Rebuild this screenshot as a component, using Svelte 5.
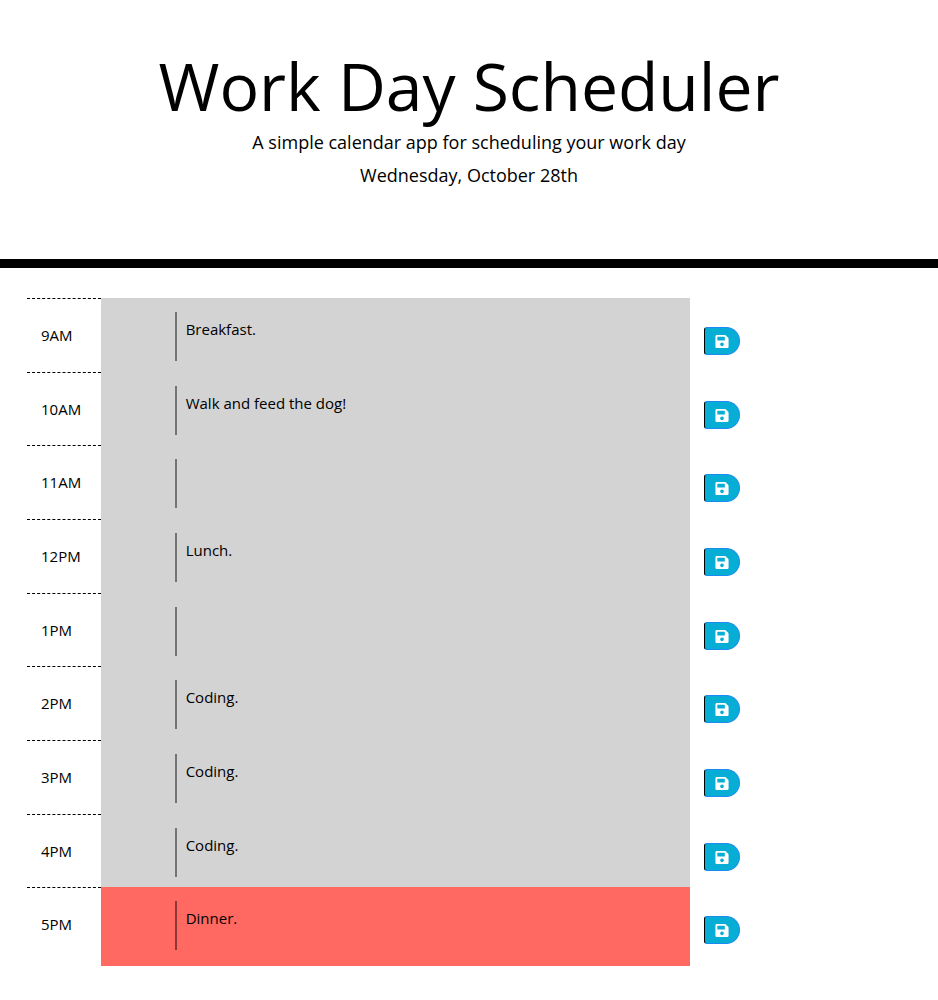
<script>
  let hours = $state([
    { label: '9AM', text: 'Breakfast.' },
    { label: '10AM', text: 'Walk and feed the dog!' },
    { label: '11AM', text: '' },
    { label: '12PM', text: 'Lunch.' },
    { label: '1PM', text: '' },
    { label: '2PM', text: 'Coding.' },
    { label: '3PM', text: 'Coding.' },
    { label: '4PM', text: 'Coding.' },
    { label: '5PM', text: 'Dinner.', present: true }
  ]);
</script>

<header>
  <h1>Work Day Scheduler</h1>
  <p>A simple calendar app for scheduling your work day</p>
  <p>Wednesday, October 28th</p>
</header>

<main>
  {#each hours as hour, i}
    <form class="row" onsubmit={(e) => e.preventDefault()}>
      <label class="hour" for="slot-{i}">{hour.label}</label>
      <div class="slot" class:present={hour.present}>
        <textarea id="slot-{i}" bind:value={hour.text}></textarea>
      </div>
      <div class="action">
        <button type="submit" aria-label="Save {hour.label}">
          <svg viewBox="0 0 448 512" aria-hidden="true">
            <path
              d="M433.9 129.9l-83.9-83.9A48 48 0 0 0 316.1 32H48C21.5 32 0 53.5 0 80v352c0 26.5 21.5 48 48 48h352c26.5 0 48-21.5 48-48V163.9a48 48 0 0 0-14.1-34zM224 416c-35.3 0-64-28.7-64-64s28.7-64 64-64 64 28.7 64 64-28.7 64-64 64zm96-304.5V212c0 6.6-5.4 12-12 12H76c-6.6 0-12-5.4-12-12V108c0-6.6 5.4-12 12-12h228.500c3.200 0 6.200 1.300 8.500 3.500l3.500 3.500a12 12 0 0 1 3.500 8.500z"
            />
          </svg>
        </button>
      </div>
    </form>
  {/each}
</main>

<style>
  :global(body) {
    margin: 0;
    background: #fff;
    color: #000;
    font-family: 'Open Sans', 'Noto Sans', sans-serif;
    font-size: 15px;
    line-height: 22px;
  }

  header {
    padding: 42px 16px 65px;
    border-bottom: 9px solid #000;
    text-align: center;
  }

  h1 {
    margin: 0;
    font-size: 66px;
    font-weight: 400;
    line-height: 86px;
  }

  p {
    margin: 0 0 5px;
    font-size: 18px;
    line-height: 28px;
  }

  main {
    padding: 30px 27px;
  }

  .row {
    display: grid;
    grid-template-columns: 1fr 8fr 3fr;
    min-height: 74px;
  }

  .row:nth-child(3n + 2) {
    min-height: 73px;
  }

  .row:last-child {
    min-height: 79px;
  }

  .hour {
    box-sizing: border-box;
    border-top: 1px dashed #000;
    padding: 25px 14px 0;
  }

  .slot {
    display: flex;
    align-items: flex-start;
    padding: 14px 14px 0 74px;
    background: #d3d3d3;
  }

  .present {
    background: #ff6961;
  }

  textarea {
    box-sizing: border-box;
    flex: 1;
    min-width: 0;
    height: 49px;
    margin: 0;
    border: 0;
    border-left: 2px solid rgba(0, 0, 0, 0.45);
    padding: 6px 9px;
    outline: 0;
    background: transparent;
    color: #000;
    font: inherit;
    resize: none;
    overflow: hidden;
  }

  .action {
    padding: 29px 14px 0;
  }

  button {
    display: flex;
    align-items: center;
    justify-content: center;
    width: 36px;
    height: 28px;
    border: 1px solid #1a8cf0;
    border-left-color: #000;
    border-radius: 3px 14px 14px 3px;
    padding: 0;
    background: #06aed5;
    color: #fff;
    cursor: pointer;
  }

  svg {
    width: 14px;
    height: 15px;
    fill: currentColor;
  }
</style>
